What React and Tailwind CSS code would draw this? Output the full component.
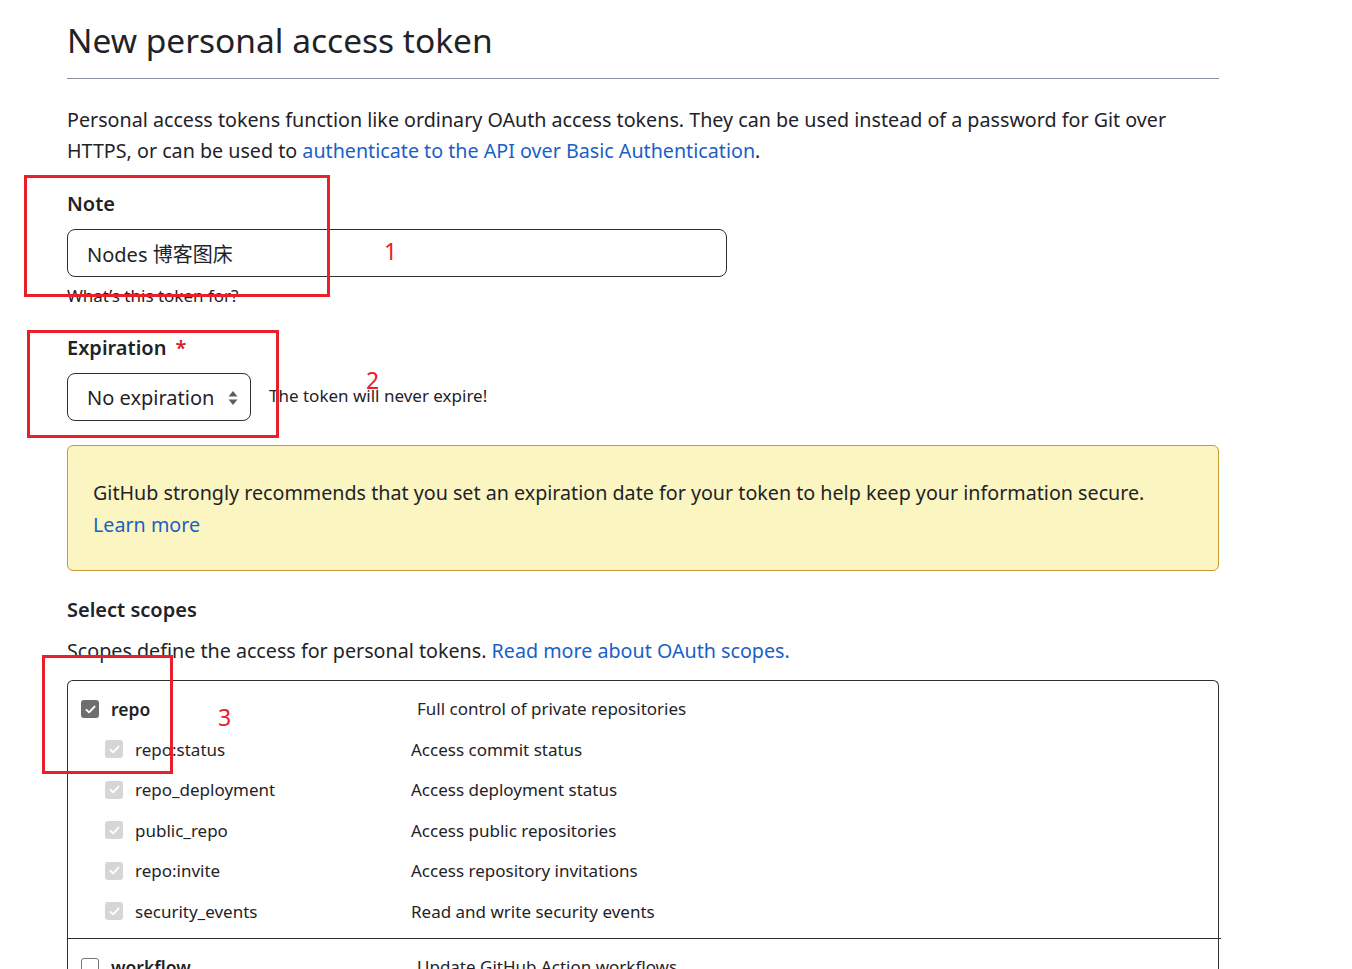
import React from 'react';

const subScopes = [
  { name: 'repo:status', desc: 'Access commit status' },
  { name: 'repo_deployment', desc: 'Access deployment status' },
  { name: 'public_repo', desc: 'Access public repositories' },
  { name: 'repo:invite', desc: 'Access repository invitations' },
  { name: 'security_events', desc: 'Read and write security events' },
];

const Check = ({ className }) => (
  <span className={`flex h-[18px] w-[18px] items-center justify-center rounded-[3px] ${className}`}>
    <svg viewBox="0 0 16 16" className="h-[13px] w-[13px]" fill="none" stroke="white" strokeWidth="2.4" strokeLinecap="round" strokeLinejoin="round">
      <path d="M3 8.5l3.2 3L13 4.5" />
    </svg>
  </span>
);

const Annotation = ({ box, num, numPos }) => (
  <>
    <div className={`pointer-events-none absolute border-[3px] border-[#e8202a] ${box}`} />
    <span className={`pointer-events-none absolute text-[23px] leading-none text-[#e8202a] ${numPos}`}>{num}</span>
  </>
);

export default function App() {
  return (
    <div className="relative min-h-screen bg-white font-['Noto_Sans','Noto_Sans_CJK_SC',sans-serif] text-[#1f2328]">
      <div className="w-[1152px] ml-[67px] pt-[18px]">
        <h1 className="border-b border-[#8b949e] pb-[16px] text-[33.5px] font-normal leading-[44px]">New personal access token</h1>

        <p className="mt-[25px] text-[19.7px] leading-[31px]">
          Personal access tokens function like ordinary OAuth access tokens. They can be used instead of a password for Git over HTTPS, or can be used to{' '}
          <a className="text-[#1b5fc6]">authenticate to the API over Basic Authentication</a>.
        </p>

        <div className="mt-[24px]">
          <label className="block text-[20px] font-semibold leading-[28px]">Note</label>
          <div className="mt-[11px] flex h-[48px] w-[660px] items-center rounded-[8px] border border-[#2d2f33] px-[19px] pt-[3px] text-[20px]">
            Nodes 博客图床
          </div>
          <p className="mt-[7px] text-[17px] leading-[24px]">What’s this token for?</p>
        </div>

        <div className="mt-[26px]">
          <label className="block text-[20px] font-semibold leading-[28px]">
            Expiration <span className="ml-[4px] text-[#cf222e]">*</span>
          </label>
          <div className="mt-[11px] flex items-center">
            <div className="flex h-[48px] w-[184px] items-center justify-between rounded-[8px] border border-[#2d2f33] pl-[19px] pr-[12px] pt-[2px] text-[20px]">
              <span>No expiration</span>
              <svg viewBox="0 0 10 16" className="h-[16px] w-[10px]" fill="#5a5f66">
                <path d="M5 1L9.5 6.5H0.5z" />
                <path d="M5 15L9.5 9.5H0.5z" />
              </svg>
            </div>
            <span className="ml-[18px] pb-[2px] text-[17px]">The token will never expire!</span>
          </div>
        </div>

        <div className="mt-[24px] rounded-[6px] border border-[#c99a2e] bg-[#fbf6c1] px-[25px] pb-[29px] pt-[31px] text-[19.7px] leading-[32px]">
          <p>GitHub strongly recommends that you set an expiration date for your token to help keep your information secure.</p>
          <a className="text-[#1b5fc6]">Learn more</a>
        </div>

        <h3 className="mt-[25px] text-[20px] font-semibold leading-[28px]">Select scopes</h3>
        <p className="mt-[11px] text-[19.7px] leading-[31px]">
          Scopes define the access for personal tokens. <a className="text-[#1b5fc6]">Read more about OAuth scopes.</a>
        </p>

        <div className="mt-[14px] h-[300px] rounded-t-[6px] border-x border-t border-[#2d2f33]">
          <div className="px-[13px] pt-[14px]">
            <div className="flex items-center">
              <div className="flex w-[336px] items-center gap-[12px]">
                <Check className="bg-[#6e6e6e]" />
                <span className="text-[17.5px] font-semibold leading-[28px]">repo</span>
              </div>
              <span className="text-[17px] leading-[28px]">Full control of private repositories</span>
            </div>
            <div className="mt-[6px] pl-[24px]">
              {subScopes.map((s) => (
                <div key={s.name} className="flex h-[40.5px] items-center">
                  <div className="flex w-[306px] items-center gap-[12px]">
                    <Check className="bg-[#d6d6d6]" />
                    <span className="text-[17px]">{s.name}</span>
                  </div>
                  <span className="text-[17px]">{s.desc}</span>
                </div>
              ))}
            </div>
          </div>
          <div className="-mr-[3px] mt-[6px] border-t border-[#2d2f33]" />
          <div className="flex items-center px-[13px] pt-[14px]">
            <div className="flex w-[336px] items-center gap-[12px]">
              <span className="h-[18px] w-[18px] rounded-[3px] border border-[#767676] bg-white" />
              <span className="text-[17.5px] font-semibold leading-[28px]">workflow</span>
            </div>
            <span className="text-[17px] leading-[28px]">Update GitHub Action workflows</span>
          </div>
        </div>
      </div>

      <Annotation box="left-[24px] top-[175px] h-[122px] w-[306px]" num="1" numPos="left-[384px] top-[240px]" />
      <Annotation box="left-[27px] top-[330px] h-[108px] w-[252px]" num="2" numPos="left-[366px] top-[369px]" />
      <Annotation box="left-[42px] top-[655px] h-[119px] w-[131px]" num="3" numPos="left-[218px] top-[706px]" />
    </div>
  );
}
